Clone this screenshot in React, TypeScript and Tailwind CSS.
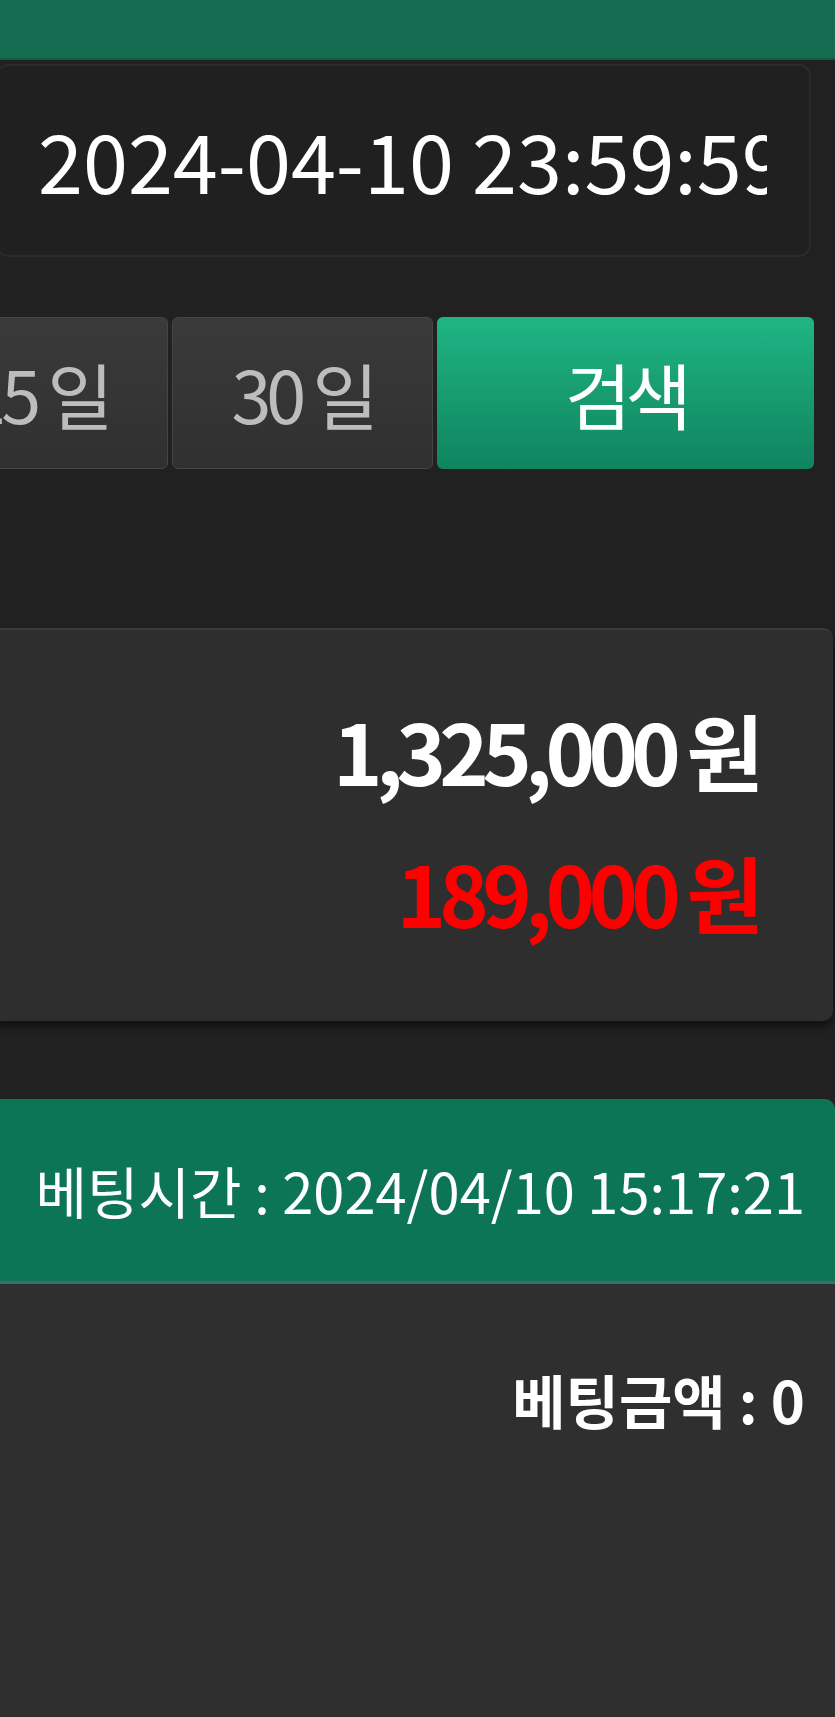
import React from 'react';

const FONT = "font-['Noto_Sans_CJK_KR','Noto_Sans',sans-serif]";

const DAYS = ['7 일', '15 일', '30 일'];

export default function App() {
  return (
    <div className={`w-[835px] min-h-[1717px] overflow-hidden bg-[#212121] ${FONT}`}>
      <div className="h-[60px] bg-[#156c50] border-b-2 border-[#0f5b43]" />

      <div className="mt-[4px] ml-[-4px] mr-[24px] h-[193px] rounded-[12px] border-2 border-[#2b2b2b] bg-[#202020] flex items-center pl-[40px] pr-[42px]">
        <div className="flex-1 overflow-hidden whitespace-nowrap text-[81px] leading-none font-normal text-white -mt-[4px]">
          2024-04-10 23:59:59
        </div>
      </div>

      <div className="mt-[60px] mr-[21px] flex justify-end gap-[4px] h-[152px]">
        {DAYS.map((d) => (
          <button
            key={d}
            className="shrink-0 w-[261px] rounded-[6px] border border-[#454545] bg-gradient-to-b from-[#3a3a3a] to-[#303030] text-[#bdbdbd] text-[72px] tracking-[-0.07em] leading-none"
          >
            {d}
          </button>
        ))}
        <button className="shrink-0 w-[377px] rounded-[6px] bg-gradient-to-b from-[#20b584] to-[#0f845e] text-white text-[72px] tracking-[-0.08em] leading-none">
          검색
        </button>
      </div>

      <div className="mt-[159px] ml-[-10px] mr-[2px] h-[393px] rounded-[10px] border-t-2 border-[#3c3c3c] bg-[#2e2e2e] shadow-[0_6px_8px_rgba(0,0,0,0.5)] flex flex-col items-end justify-center gap-[58px] pr-[76px]">
        <p className="text-[84px] leading-none font-bold tracking-[-0.08em] text-white -mt-[10px]">1,325,000 원</p>
        <p className="text-[84px] leading-none font-bold tracking-[-0.08em] text-[#ff0000]">189,000 원</p>
      </div>

      <div className="mt-[78px] ml-[-10px] rounded-tr-[10px] bg-[#0b7556] border-b-[3px] border-[#3b6c70] h-[185px] flex items-center justify-end pr-[30px]">
        <p className="text-[56px] leading-none text-white whitespace-nowrap">베팅시간 : 2024/04/10 15:17:21</p>
      </div>

      <div className="bg-[#2f2f2f] min-h-[440px] flex justify-end pr-[30px] pt-[86px]">
        <p className="text-[58px] leading-none font-bold text-white whitespace-nowrap">베팅금액 : 0</p>
      </div>
    </div>
  );
}
